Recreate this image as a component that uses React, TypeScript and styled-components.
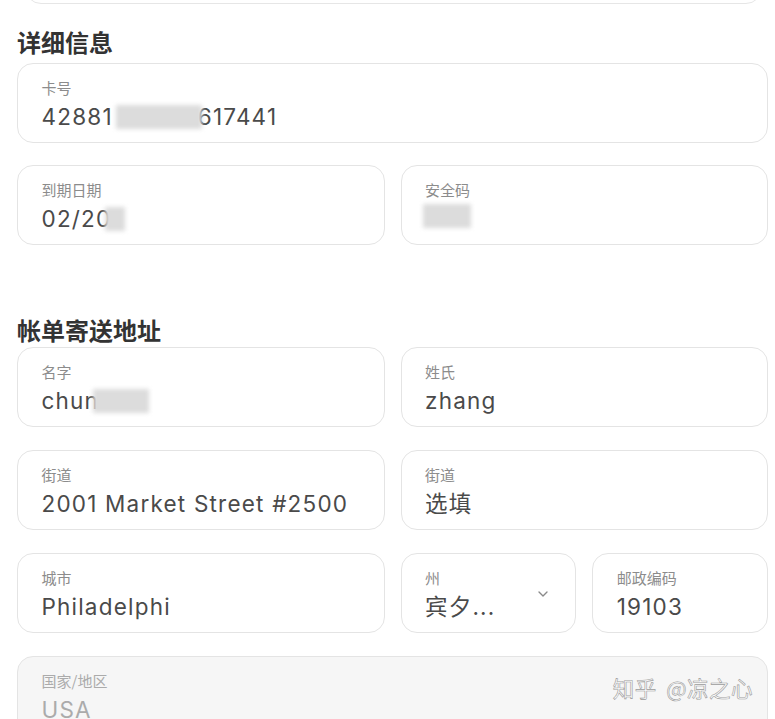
import React from "react";
import styled, { createGlobalStyle } from "styled-components";

const Global = createGlobalStyle`
  html, body { margin: 0; padding: 0; background: #ffffff; }
  body { font-family: Inter, "Noto Sans CJK SC", "Noto Sans", sans-serif; overflow: hidden; }
`;

const Page = styled.div`
  position: relative;
  padding: 0 7px 0 17px;
  width: 775px;
  height: 719px;
  box-sizing: border-box;
  overflow: hidden;
`;

const PrevCard = styled.div`
  height: 40px;
  margin: -38px 6px 0 8px;
  border: 1.5px solid #e6e6e6;
  border-radius: 16px;
`;

const Heading = styled.h2<{ $top: number; $bottom: number }>`
  margin: ${(p) => p.$top}px 0 ${(p) => p.$bottom}px 0;
  font-family: "Noto Sans CJK SC", sans-serif;
  font-size: 24px;
  line-height: 32px;
  font-weight: 700;
  color: #333333;
`;

const Rows = styled.div<{ $gap: number }>`
  display: flex;
  flex-direction: column;
  gap: ${(p) => p.$gap}px;
`;

const Row = styled.div<{ $cols: string }>`
  display: grid;
  grid-template-columns: ${(p) => p.$cols};
  gap: 16px;
`;

const Field = styled.div<{ $disabled?: boolean }>`
  position: relative;
  height: 80px;
  box-sizing: border-box;
  border: 1.5px solid #e4e4e4;
  border-radius: 16px;
  background: ${(p) => (p.$disabled ? "#f6f6f6" : "#ffffff")};
  padding: 13px 22px 0 23.5px;
  display: flex;
  flex-direction: column;
  gap: 4px;
  overflow: hidden;
`;

const Label = styled.div<{ $disabled?: boolean }>`
  font-family: "Noto Sans CJK SC", sans-serif;
  font-size: 15px;
  line-height: 21px;
  color: ${(p) => (p.$disabled ? "#ababab" : "#8c8c8c")};
  white-space: nowrap;
`;

const Value = styled.div<{ $disabled?: boolean }>`
  font-family: Inter, "Noto Sans CJK SC", sans-serif;
  font-size: 22.5px;
  letter-spacing: 1.2px;
  line-height: 30px;
  color: ${(p) => (p.$disabled ? "#ababab" : "#4a4a4a")};
  white-space: nowrap;
  display: flex;
  align-items: center;
`;

const Blur = styled.span<{ $w: number; $ml?: number; $mr?: number }>`
  display: inline-block;
  width: ${(p) => p.$w}px;
  height: 24px;
  margin-left: ${(p) => p.$ml ?? 0}px;
  margin-right: ${(p) => p.$mr ?? 0}px;
  background: #dcdcdc;
  filter: blur(2px);
  position: relative;
  z-index: 1;
`;

const Chevron = styled.svg`
  position: absolute;
  right: 24px;
  top: 32px;
`;

const Watermark = styled.div`
  position: absolute;
  right: 22px;
  top: 673px;
  font-family: "Noto Sans CJK SC", sans-serif;
  font-size: 21.5px;
  line-height: 30px;
  color: #ffffff;
  -webkit-text-stroke: 0.6px #9a9a9a;
  letter-spacing: 0.5px;
  word-spacing: 4px;
`;

export default function App() {
  return (
    <>
      <Global />
      <Page>
        <PrevCard />
        <Heading $top={22} $bottom={5}>详细信息</Heading>
        <Rows $gap={22}>
          <Row $cols="1fr">
            <Field>
              <Label>卡号</Label>
              <Value>
                42881
                <Blur $w={86} $ml={3} $mr={-4} />
                617441
              </Value>
            </Field>
          </Row>
          <Row $cols="1fr 1fr">
            <Field>
              <Label>到期日期</Label>
              <Value>
                02/20
                <Blur $w={20} $ml={-6} />
              </Value>
            </Field>
            <Field>
              <Label>安全码</Label>
              <Value>
                <Blur $w={48} $ml={-2} />
              </Value>
            </Field>
          </Row>
        </Rows>
        <Heading $top={69} $bottom={1}>帐单寄送地址</Heading>
        <Rows $gap={23}>
          <Row $cols="1fr 1fr">
            <Field>
              <Label>名字</Label>
              <Value>
                chun
                <Blur $w={56} $ml={-6} />
              </Value>
            </Field>
            <Field>
              <Label>姓氏</Label>
              <Value>zhang</Value>
            </Field>
          </Row>
          <Row $cols="1fr 1fr">
            <Field>
              <Label>街道</Label>
              <Value>2001 Market Street #2500</Value>
            </Field>
            <Field>
              <Label>街道</Label>
              <Value>选填</Value>
            </Field>
          </Row>
          <Row $cols="1fr 1fr">
            <Field>
              <Label>城市</Label>
              <Value>Philadelphi</Value>
            </Field>
            <Row $cols="1fr 1fr">
              <Field>
                <Label>州</Label>
                <Value>宾夕...</Value>
                <Chevron width="16" height="16" viewBox="0 0 24 24" fill="none" stroke="#8a8a8a" strokeWidth="2" strokeLinecap="round" strokeLinejoin="round">
                  <path d="M6 9l6 6 6-6" />
                </Chevron>
              </Field>
              <Field>
                <Label>邮政编码</Label>
                <Value>19103</Value>
              </Field>
            </Row>
          </Row>
          <Row $cols="1fr">
            <Field $disabled>
              <Label $disabled>国家/地区</Label>
              <Value $disabled>USA</Value>
            </Field>
          </Row>
        </Rows>
        <Watermark>知乎 @凉之心</Watermark>
      </Page>
    </>
  );
}
